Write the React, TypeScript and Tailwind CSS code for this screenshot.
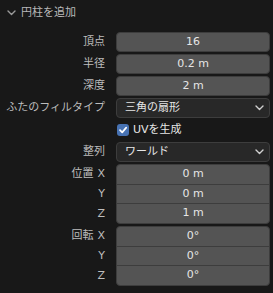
import React from "react";

const font = { fontFamily: '"DejaVu Sans", "Noto Sans CJK JP", sans-serif' };

function Chevron({ className = "" }: { className?: string }) {
  return (
    <svg width="9" height="6" viewBox="0 0 9 6" className={className}>
      <path d="M1 1 L4.5 4.5 L8 1" fill="none" stroke="currentColor" strokeWidth="1.4" strokeLinecap="round" strokeLinejoin="round" />
    </svg>
  );
}

function Label({ children }: { children?: React.ReactNode }) {
  return (
    <div className="flex w-[106px] shrink-0 items-center justify-end pr-[1px] text-[11px] leading-[20px] text-[#bdbdbd] whitespace-nowrap">
      {children}
    </div>
  );
}

function NumRow({ label, value }: { label: string; value: string }) {
  return (
    <div className="flex h-[20px] items-center gap-[10px]">
      <Label>{label}</Label>
      <div className="flex h-[20px] w-[154px] items-center justify-center rounded-[4px] border border-[#3d3d3d] bg-[#545454] text-[11px] text-[#e6e6e6]">
        {value}
      </div>
    </div>
  );
}

function SelectRow({ label, value }: { label: string; value: string }) {
  return (
    <div className="flex h-[20px] items-center gap-[10px]">
      <Label>{label}</Label>
      <div className="flex h-[20px] w-[154px] items-center justify-between rounded-[4px] border border-[#3d3d3d] bg-[#282828] pl-[8px] pr-[5px] text-[11px] text-[#e6e6e6]">
        <span>{value}</span>
        <Chevron className="text-[#d0d0d0]" />
      </div>
    </div>
  );
}

function Group({ label, rows }: { label: string; rows: [string, string][] }) {
  return (
    <div className="flex h-[60px] gap-[10px]">
      <div className="flex flex-col">
        {rows.map(([l], i) => (
          <Label key={i}>
            {i === 0 && <span className="mr-[4px]">{label}</span>}
            <span>{l}</span>
          </Label>
        ))}
      </div>
      <div className="flex h-[60px] w-[154px] flex-col overflow-hidden rounded-[4px] border border-[#3d3d3d] bg-[#545454]">
        {rows.map(([, v], i) => (
          <div
            key={i}
            className={`flex flex-1 items-center justify-center text-[11px] text-[#e6e6e6] ${i > 0 ? "border-t border-[#3d3d3d]" : ""}`}
          >
            {v}
          </div>
        ))}
      </div>
    </div>
  );
}

export default function App() {
  return (
    <div className="h-[293px] w-[273px] overflow-hidden bg-[#181818]" style={font}>
      <div className="flex h-[25px] items-center pl-[7px] pt-[1px] text-[11px] text-[#b8b8b8]">
        <Chevron className="mr-[5px] text-[#9a9a9a]" />
        <span>円柱を追加</span>
      </div>
      <div className="flex flex-col gap-[2px] pt-[7px]">
        <NumRow label="頂点" value="16" />
        <NumRow label="半径" value="0.2 m" />
        <NumRow label="深度" value="2 m" />
        <SelectRow label="ふたのフィルタイプ" value="三角の扇形" />
        <div className="flex h-[20px] items-center gap-[10px]">
          <Label />
          <div className="flex items-center gap-[4px] pl-[1px] text-[11px] text-[#e6e6e6]">
            <div className="flex h-[12px] w-[12px] items-center justify-center rounded-[3px] bg-[#4772b3]">
              <svg width="10" height="10" viewBox="0 0 10 10">
                <path d="M2 5.2 L4.2 7.4 L8.2 2.6" fill="none" stroke="#ffffff" strokeWidth="1.7" strokeLinecap="round" strokeLinejoin="round" />
              </svg>
            </div>
            <span>UVを生成</span>
          </div>
        </div>
        <SelectRow label="整列" value="ワールド" />
        <Group label="位置" rows={[["X", "0 m"], ["Y", "0 m"], ["Z", "1 m"]]} />
        <Group label="回転" rows={[["X", "0°"], ["Y", "0°"], ["Z", "0°"]]} />
      </div>
    </div>
  );
}
